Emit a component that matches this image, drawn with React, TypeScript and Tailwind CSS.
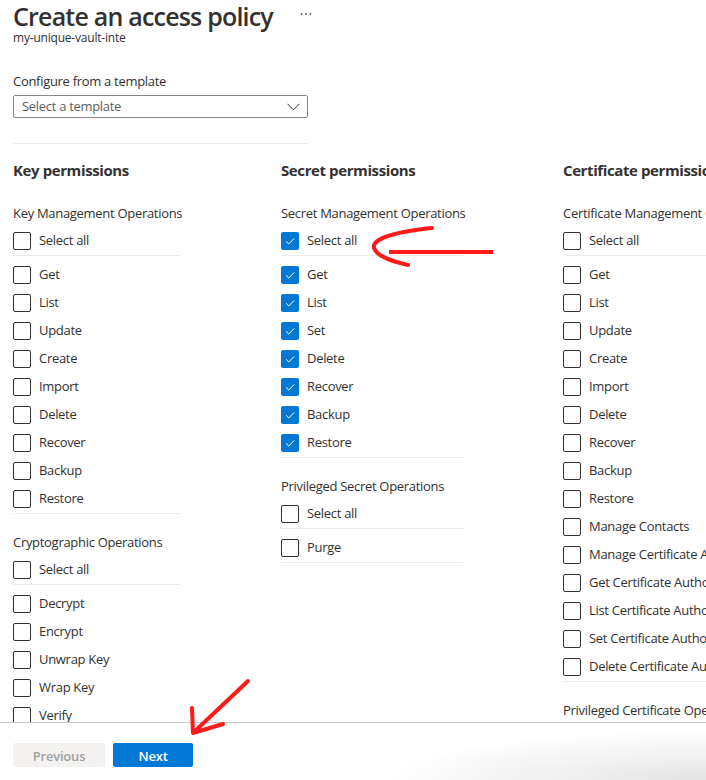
import React from "react"

const font = { fontFamily: '"Open Sans", "Noto Sans", sans-serif' }

function Box({ checked }: { checked?: boolean }) {
  if (checked) {
    return (
      <span className="flex h-[18px] w-[18px] shrink-0 items-center justify-center rounded-[2px] bg-[#0078d4]">
        <svg width="12" height="12" viewBox="0 0 12 12" fill="none">
          <path d="M2 6.3 L4.8 9 L10.2 3.4" stroke="#fff" strokeWidth="1" />
        </svg>
      </span>
    )
  }
  return <span className="h-[18px] w-[18px] shrink-0 rounded-[2px] border border-[#323130] bg-white" />
}

function Row({ label, checked }: { label: string; checked?: boolean }) {
  return (
    <div className="flex h-[28px] items-center gap-[8px] whitespace-nowrap text-[13px] tracking-[-0.3px] text-[#323130]">
      <Box checked={checked} />
      <span>{label}</span>
    </div>
  )
}

function Group({
  title,
  items,
  checked,
  first,
  width,
}: {
  title: string
  items: string[]
  checked?: boolean
  first?: boolean
  width: string
}) {
  return (
    <div className={first ? "" : "mt-[19px]"}>
      <div className="h-[18px] whitespace-nowrap text-[13px] leading-[18px] tracking-[-0.3px] text-[#323130]">{title}</div>
      <div className={`mt-[5px] border-b border-[#edebe9] ${width}`}>
        <Row label="Select all" checked={checked} />
      </div>
      <div className={`border-b border-[#edebe9] pt-[5px] ${width}`}>
        {items.map((it) => (
          <Row key={it} label={it} checked={checked} />
        ))}
      </div>
    </div>
  )
}

function Heading({ children }: { children: React.ReactNode }) {
  return (
    <h2 className="mb-[24px] h-[20px] whitespace-nowrap text-[15px] font-bold leading-[20px] tracking-[-0.4px] text-[#323130]">
      {children}
    </h2>
  )
}

export default function App() {
  return (
    <div className="relative flex h-[780px] w-[706px] flex-col overflow-hidden bg-white" style={font}>
      <div className="flex-1 overflow-hidden pl-[13px]">
        {/* Header */}
        <div className="flex h-[30px] items-center gap-[27px] pt-[3px]">
          <h1 className="whitespace-nowrap text-[25px] font-semibold leading-[27px] tracking-[-0.8px] text-[#323130]">
            Create an access policy
          </h1>
          <svg width="12" height="4" viewBox="0 0 12 4" className="mt-[-6px]">
            <circle cx="1.5" cy="2" r="0.9" fill="#605e5c" />
            <circle cx="6" cy="2" r="0.9" fill="#605e5c" />
            <circle cx="10.5" cy="2" r="0.9" fill="#605e5c" />
          </svg>
        </div>
        <div className="h-[16px] text-[12px] leading-[16px] tracking-[-0.2px] text-[#323130]">my-unique-vault-inte</div>

        {/* Template */}
        <div className="mt-[26px] h-[18px] text-[13px] leading-[18px] tracking-[-0.3px] text-[#323130]">
          Configure from a template
        </div>
        <div className="mt-[5px] flex h-[23px] w-[295px] items-center justify-between rounded-[2px] border border-[#8a8886] pl-[8px] pr-[7px]">
          <span className="text-[13px] tracking-[-0.3px] text-[#605e5c]">Select a template</span>
          <svg width="13" height="8" viewBox="0 0 13 8" fill="none">
            <path d="M0.5 0.8 L6.5 6.8 L12.5 0.8" stroke="#323130" strokeWidth="1" />
          </svg>
        </div>
        <div className="mt-[25px] h-px w-[295px] bg-[#edebe9]" />

        {/* Columns */}
        <div className="mt-[16px] flex">
          <div className="w-[268px] shrink-0">
            <Heading>Key permissions</Heading>
            <Group
              first
              width="w-[167px]"
              title="Key Management Operations"
              items={["Get", "List", "Update", "Create", "Import", "Delete", "Recover", "Backup", "Restore"]}
            />
            <Group
              width="w-[167px]"
              title="Cryptographic Operations"
              items={["Decrypt", "Encrypt", "Unwrap Key", "Wrap Key", "Verify", "Sign"]}
            />
          </div>
          <div className="w-[282px] shrink-0">
            <Heading>Secret permissions</Heading>
            <Group
              first
              checked
              width="w-[182px]"
              title="Secret Management Operations"
              items={["Get", "List", "Set", "Delete", "Recover", "Backup", "Restore"]}
            />
            <Group width="w-[182px]" title="Privileged Secret Operations" items={["Purge"]} />
          </div>
          <div className="w-[200px] shrink-0">
            <Heading>Certificate permissions</Heading>
            <Group
              first
              width="w-[200px]"
              title="Certificate Management Operations"
              items={[
                "Get",
                "List",
                "Update",
                "Create",
                "Import",
                "Delete",
                "Recover",
                "Backup",
                "Restore",
                "Manage Contacts",
                "Manage Certificate Authorities",
                "Get Certificate Authorities",
                "List Certificate Authorities",
                "Set Certificate Authorities",
                "Delete Certificate Authorities",
              ]}
            />
            <Group width="w-[200px]" title="Privileged Certificate Operations" items={["Purge"]} />
          </div>
        </div>
      </div>

      {/* Footer */}
      <div className="relative h-[58px] shrink-0 border-t border-[#c8c6c4] bg-white">
        <div className="absolute bottom-0 right-0 h-[50px] w-[330px] bg-[radial-gradient(ellipse_at_bottom_right,#e4e4e4,rgba(255,255,255,0)_70%)]" />
        <div className="relative flex gap-[8px] pl-[13px] pt-[20px]">
          <button className="h-[24px] w-[92px] rounded-[2px] bg-[#f3f2f1] pt-[2px] text-[13px] font-semibold leading-[22px] tracking-[-0.2px] text-[#a19f9d]">
            Previous
          </button>
          <button className="h-[24px] w-[80px] rounded-[2px] bg-[#0078d4] pt-[2px] text-[13px] font-semibold leading-[22px] tracking-[-0.2px] text-white">
            Next
          </button>
        </div>
      </div>

      {/* Red annotation arrows */}
      <svg className="pointer-events-none absolute left-0 top-0" width="706" height="780" fill="none">
        <path d="M389 252 L493 252" stroke="#ff1a1a" strokeWidth="4" />
        <path d="M432 228 C392 232 368 240 375 250 C380 258 395 262 408 265" stroke="#ff1a1a" strokeWidth="4" strokeLinecap="round" />
        <path d="M248 681 L194 732" stroke="#ff1a1a" strokeWidth="4" strokeLinecap="round" />
        <path d="M192 708 L193 733 L223 724" stroke="#ff1a1a" strokeWidth="4" strokeLinecap="round" strokeLinejoin="round" />
      </svg>
    </div>
  )
}
